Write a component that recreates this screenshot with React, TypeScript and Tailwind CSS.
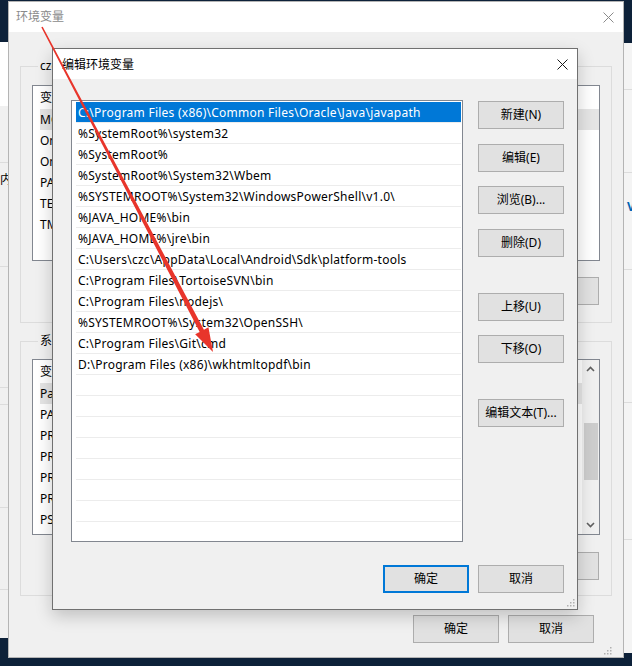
import React from 'react';

const paths = [
  'C:\\Program Files (x86)\\Common Files\\Oracle\\Java\\javapath',
  '%SystemRoot%\\system32',
  '%SystemRoot%',
  '%SystemRoot%\\System32\\Wbem',
  '%SYSTEMROOT%\\System32\\WindowsPowerShell\\v1.0\\',
  '%JAVA_HOME%\\bin',
  '%JAVA_HOME%\\jre\\bin',
  'C:\\Users\\czc\\AppData\\Local\\Android\\Sdk\\platform-tools',
  'C:\\Program Files\\TortoiseSVN\\bin',
  'C:\\Program Files\\nodejs\\',
  '%SYSTEMROOT%\\System32\\OpenSSH\\',
  'C:\\Program Files\\Git\\cmd',
  'D:\\Program Files (x86)\\wkhtmltopdf\\bin',
];

const userVars = ['MOZ_PLUGIN_PATH', 'OneDrive', 'OneDriveConsumer', 'PATH', 'TEMP', 'TMP'];
const sysVars = ['Path', 'PATHEXT', 'PROCESSOR_ARCHITECTURE', 'PROCESSOR_IDENTIFIER', 'PROCESSOR_LEVEL', 'PROCESSOR_REVISION', 'PSModulePath'];

const Btn: React.FC<{ children: React.ReactNode; primary?: boolean; className?: string }> = ({ children, primary, className = '' }) => (
  <div
    className={`flex h-[28px] w-[86px] shrink-0 items-center justify-center bg-[#e1e1e1] text-[12px] text-black ${
      primary ? 'border-2 border-[#0078d7]' : 'border border-[#adadad]'
    } ${className}`}
  >
    {children}
  </div>
);

const CloseX: React.FC<{ color: string }> = ({ color }) => (
  <svg width="11" height="11" viewBox="0 0 11 11">
    <path d="M0.5 0.5 L10.5 10.5 M10.5 0.5 L0.5 10.5" stroke={color} strokeWidth="1" />
  </svg>
);

const Grip: React.FC = () => (
  <svg width="8" height="8" viewBox="0 0 8 8">
    <rect x="6" y="0" width="1.5" height="1.5" fill="#b0b0b0" />
    <rect x="3" y="3" width="1.5" height="1.5" fill="#b0b0b0" />
    <rect x="6" y="3" width="1.5" height="1.5" fill="#b0b0b0" />
    <rect x="0" y="6" width="1.5" height="1.5" fill="#b0b0b0" />
    <rect x="3" y="6" width="1.5" height="1.5" fill="#b0b0b0" />
    <rect x="6" y="6" width="1.5" height="1.5" fill="#b0b0b0" />
  </svg>
);

// list in the window behind; only its left edge shows past the dialog
const VarList: React.FC<{ items: string[]; selected: number; scroll?: boolean }> = ({ items, selected, scroll }) => (
  <div className="flex h-[176px] border border-[#828790] bg-white">
    <div className="flex-1 pl-[7px]">
      <div className="flex h-[23px] items-center text-[12px]">变量</div>
      {items.map((v, i) => (
        <div key={v} className={`flex h-[21px] items-center text-[12px] ${i === selected ? 'bg-[#e5e5e5]' : ''}`}>
          {v}
        </div>
      ))}
    </div>
    {scroll && (
      <div className="flex w-[17px] flex-col items-center bg-[#f0f0f0] py-[6px]">
        <svg width="9" height="6" viewBox="0 0 9 6"><path d="M1 5 L4.5 1.5 L8 5" stroke="#606060" strokeWidth="1.6" fill="none" /></svg>
        <div className="mt-[51px] h-[57px] w-[14px] bg-[#cdcdcd]" />
        <div className="flex-1" />
        <svg width="9" height="6" viewBox="0 0 9 6"><path d="M1 1 L4.5 4.5 L8 1" stroke="#606060" strokeWidth="1.6" fill="none" /></svg>
      </div>
    )}
  </div>
);

export default function App() {
  const rows = Array.from({ length: 20 }, (_, i) => paths[i] ?? '');

  return (
    <div
      className="relative h-[666px] w-[632px] overflow-hidden bg-[#0d2139] text-black"
      style={{ fontFamily: '"Noto Sans", "Noto Sans CJK SC", sans-serif' }}
    >
      {/* windows behind, at the screen edges */}
      <div className="absolute left-0 top-[42px] flex h-[596px] w-[8px] flex-col bg-[#f0f0f0] text-[12px]">
        <div className="h-[64px] bg-white" />
        <div className="h-[57px] border-b border-[#dcdcdc]" />
        <div className="h-[104px] border-b border-[#dcdcdc] pt-[8px] leading-[18px]">内</div>
        <div className="h-[121px] border-b border-[#dcdcdc]" />
        <div className="h-[17px] border-b border-[#dcdcdc]" />
        <div className="h-[103px] border-b border-[#dcdcdc]" />
        <div className="h-[82px] border-b border-[#dcdcdc]" />
      </div>
      <div className="absolute left-[624px] top-[43px] flex h-[610px] w-[8px] flex-col bg-[#f4f4f4] text-[12px]">
        <div className="h-[47px] border-b border-[#dcdcdc]" />
        <div className="h-[83px] border-b border-[#dcdcdc]" />
        <div className="h-[97px] border-b border-[#dcdcdc] pt-[24px] pl-[3px] font-bold leading-[20px] text-[#0063b1]">V</div>
        <div className="h-[133px] border-b border-[#dcdcdc]" />
        <div className="h-[137px] border-b border-[#dcdcdc]" />
      </div>

      {/* 环境变量 window */}
      <div className="absolute left-[8px] top-[1px] flex h-[657px] w-[616px] flex-col border border-[#b4b4b4] bg-[#f0f0f0]">
        <div className="flex h-[30px] items-center justify-between bg-white pl-[7px] pr-[9px] text-[12px] text-[#8a8a8a]">
          <span>环境变量</span>
          <CloseX color="#8a8a8a" />
        </div>
        <div className="flex flex-1 flex-col px-[11px]">
          <fieldset className="mt-[26px] border border-[#dcdcdc] px-[11px] pb-[17px]">
            <legend className="ml-[6px] px-[2px] text-[12px] leading-[16px]">czc 的用户变量</legend>
            <div className="mt-[11px]">
              <VarList items={userVars} selected={0} />
            </div>
            <div className="mt-[16px] flex justify-end gap-[9px] pr-[1px]">
              <Btn>新建(N)...</Btn>
              <Btn>编辑(E)...</Btn>
              <Btn>删除(D)</Btn>
            </div>
          </fieldset>
          <fieldset className="mt-[10px] border border-[#dcdcdc] px-[11px] pb-[15px]">
            <legend className="ml-[6px] px-[2px] text-[12px] leading-[16px]">系统变量</legend>
            <div className="mt-[10px]">
              <VarList items={sysVars} selected={0} scroll />
            </div>
            <div className="mt-[17px] flex justify-end gap-[9px] pr-[1px]">
              <Btn>新建(W)...</Btn>
              <Btn>编辑(I)...</Btn>
              <Btn>删除(L)</Btn>
            </div>
          </fieldset>
          <div className="mt-[19px] flex justify-end gap-[9px] pr-[18px]">
            <Btn>确定</Btn>
            <Btn>取消</Btn>
          </div>
          <div className="mt-auto flex justify-end pb-[2px]">
            <Grip />
          </div>
        </div>
      </div>

      {/* 编辑环境变量 dialog */}
      <div className="absolute left-[52px] top-[48px] flex h-[562px] w-[526px] flex-col border border-[#707070] bg-[#f0f0f0] shadow-[0_6px_16px_rgba(0,0,0,0.2)]">
        <div className="flex h-[30px] items-center justify-between bg-white pl-[9px] pr-[9px] text-[12px]">
          <span className="pt-[1px]">编辑环境变量</span>
          <CloseX color="#1a1a1a" />
        </div>
        <div className="flex pl-[18px] pt-[21px]">
          <div className="h-[442px] w-[392px] border border-[#828790] bg-white pt-[1px] pl-[4px] pr-[1px]">
            {rows.map((p, i) => (
              <div
                key={i}
                className={`h-[21px] border-b border-[#ececec] pl-[2px] pt-[1px] text-[12px] leading-[19px] tracking-[0.25px] whitespace-nowrap ${
                  i === 0 ? 'bg-[#0078d7] text-white' : ''
                }`}
              >
                {p}
              </div>
            ))}
          </div>
          <div className="ml-[15px] flex flex-col pt-[1px]">
            <Btn>新建(N)</Btn>
            <Btn className="mt-[15px]">编辑(E)</Btn>
            <Btn className="mt-[14px]">浏览(B)...</Btn>
            <Btn className="mt-[15px]">删除(D)</Btn>
            <Btn className="mt-[36px]">上移(U)</Btn>
            <Btn className="mt-[14px]">下移(O)</Btn>
            <Btn className="mt-[36px]">编辑文本(T)...</Btn>
          </div>
        </div>
        <div className="mt-[23px] flex justify-end gap-[9px] pr-[13px]">
          <Btn primary>确定</Btn>
          <Btn>取消</Btn>
        </div>
        <div className="mt-auto flex justify-end pb-[2px] pr-[2px]">
          <Grip />
        </div>
      </div>

      {/* red annotation arrow */}
      <svg className="pointer-events-none absolute left-0 top-0" width="632" height="666" viewBox="0 0 632 666">
        <polygon
          points="42.71,26.63 203.92,329.68 208.44,327.31 213,352 195.16,334.29 199.68,331.92 41.29,27.37"
          fill="#e8352b"
        />
      </svg>
    </div>
  );
}
